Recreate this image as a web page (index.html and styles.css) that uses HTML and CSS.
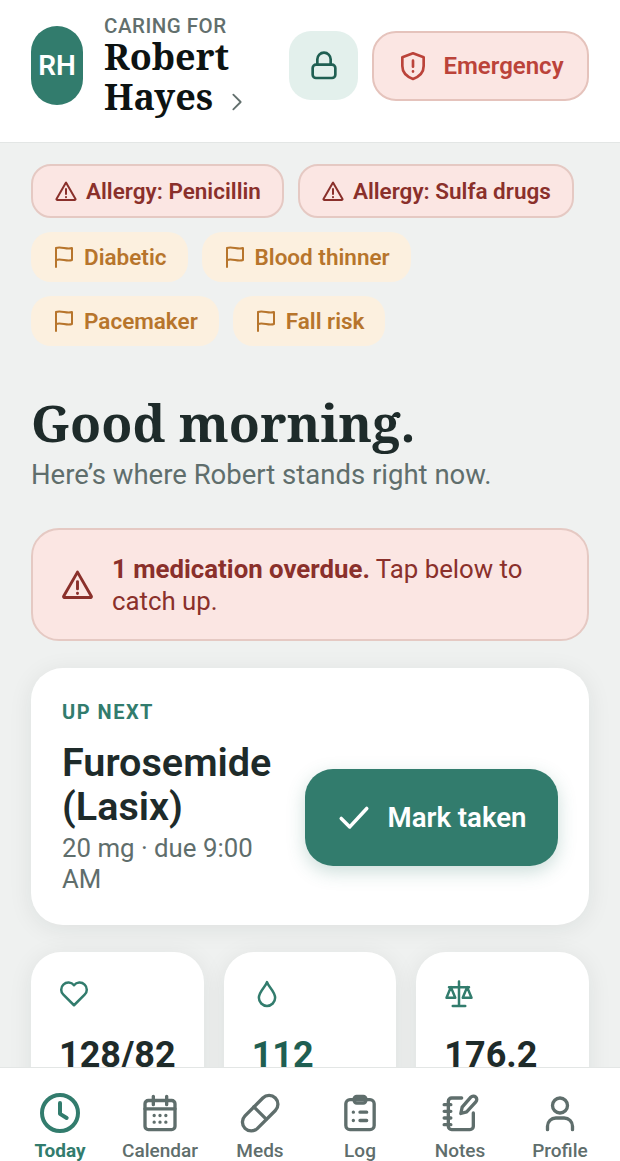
FILE: index.html
```html
<!DOCTYPE html>
<html lang="en">
<head>
<meta charset="utf-8">
<title>Today</title>
<link rel="stylesheet" href="styles.css">
</head>
<body>
<div class="app">
  <header class="topbar">
    <div class="avatar">RH</div>
    <div class="who">
      <div class="caring">CARING FOR</div>
      <div class="name">Robert<br>Hayes <svg class="chev" viewBox="0 0 24 24"><path d="M8 4l8 8-8 8"/></svg></div>
    </div>
    <button class="lock"><svg viewBox="0 0 24 24"><rect x="3.500" y="11" width="17" height="10" rx="2.500"/><path d="M7 11V7a5 5 0 0 1 10 0v4"/></svg></button>
    <button class="emergency"><svg viewBox="0 0 24 24"><path d="M12 2.500l8 3v6.500c0 5-3.400 8-8 9.700-4.600-1.700-8-4.700-8-9.700V5.500z"/><path d="M12 8v4.500M12 16v.2"/></svg>Emergency</button>
  </header>
  <main class="content">
    <div class="chips">
      <span class="chip allergy"><svg viewBox="0 0 24 24"><path d="M12 3.500L2.500 20a.6.6 0 0 0 .5.900h18a.6.6 0 0 0 .5-.900z"/><path d="M12 10v5M12 18v.2"/></svg>Allergy: Penicillin</span>
      <span class="chip allergy"><svg viewBox="0 0 24 24"><path d="M12 3.500L2.500 20a.6.6 0 0 0 .5.900h18a.6.6 0 0 0 .5-.900z"/><path d="M12 10v5M12 18v.2"/></svg>Allergy: Sulfa drugs</span>
      <span class="chip flag"><svg viewBox="0 0 24 24"><path d="M4 22V3c5-2 11 2 16 0v12c-5 2-11-2-16 0"/></svg>Diabetic</span>
      <span class="chip flag"><svg viewBox="0 0 24 24"><path d="M4 22V3c5-2 11 2 16 0v12c-5 2-11-2-16 0"/></svg>Blood thinner</span>
      <span class="chip flag"><svg viewBox="0 0 24 24"><path d="M4 22V3c5-2 11 2 16 0v12c-5 2-11-2-16 0"/></svg>Pacemaker</span>
      <span class="chip flag"><svg viewBox="0 0 24 24"><path d="M4 22V3c5-2 11 2 16 0v12c-5 2-11-2-16 0"/></svg>Fall risk</span>
    </div>
    <h1 class="greeting">Good morning.</h1>
    <p class="sub">Here’s where Robert stands right now.</p>
    <div class="alert">
      <svg viewBox="0 0 24 24"><path d="M12 3.500L2.500 20a.6.6 0 0 0 .5.900h18a.6.6 0 0 0 .5-.900z"/><path d="M12 10v5M12 18v.2"/></svg>
      <p><strong>1 medication overdue.</strong> Tap below to catch up.</p>
    </div>
    <section class="next">
      <div class="eyebrow">UP NEXT</div>
      <div class="next-row">
        <div class="next-info">
          <div class="med">Furosemide (Lasix)</div>
          <div class="dose">20 mg · due 9:00 AM</div>
        </div>
        <button class="taken"><svg viewBox="0 0 24 24"><path d="M3 13l6 6L21 6"/></svg>Mark taken</button>
      </div>
    </section>
    <div class="vitals">
      <div class="vital"><svg viewBox="0 0 24 24"><path d="M12 21L3.500 12.500a5.500 5.500 0 0 1 0-8 5.800 5.800 0 0 1 8.500 .5 5.800 5.800 0 0 1 8.500-.5 5.500 5.500 0 0 1 0 8z"/></svg><div class="val">128/82</div></div>
      <div class="vital"><svg viewBox="0 0 24 24"><path d="M12 2.500c1 3.500 6.500 7.500 6.500 12.500a6.500 6.500 0 0 1-13 0c0-5 5.500-9 6.500-12.500z"/></svg><div class="val good">112</div></div>
      <div class="vital"><svg viewBox="0 0 24 24"><path d="M12 2v19M7 21.500h10M4 6.500h16M5.500 6.500l-3.500 8.500h7zM18.500 6.500l-3.500 8.500h7z"/></svg><div class="val">176.2</div></div>
    </div>
  </main>
  <nav class="tabs">
    <a class="tab active"><svg viewBox="0 0 24 24"><circle cx="12" cy="12" r="10.800"/><path d="M12 6v6.500l4 2.500"/></svg>Today</a>
    <a class="tab"><svg viewBox="0 0 24 24"><rect x="3" y="4.500" width="18" height="17.500" rx="2"/><path d="M8 2v5M16 2v5M3 9.500h18"/><path class="dots" d="M8.500 13.500h.01M12 13.500h.01M15.500 13.500h.01M8.500 17.500h.01M12 17.500h.01M15.500 17.500h.01"/></svg>Calendar</a>
    <a class="tab"><svg viewBox="0 0 24 24"><path d="M10.500 21.200l10.700-10.700a5.300 5.300 0 0 0-7.500-7.500L3 13.700a5.300 5.300 0 0 0 7.500 7.500z"/><path d="M8.300 8.300l7.400 7.400"/></svg>Meds</a>
    <a class="tab"><svg viewBox="0 0 24 24"><rect x="3.500" y="4" width="17" height="18" rx="2.500"/><rect x="8.500" y="2" width="7" height="4" rx="1.500"/><path d="M8 11.500h.01M8 16.500h.01M12 11.500h4M12 16.500h4"/></svg>Log</a>
    <a class="tab"><svg viewBox="0 0 24 24"><path d="M13 3H7a2 2 0 0 0-2 2v15a2 2 0 0 0 2 2h11a2 2 0 0 0 2-2v-8"/><path d="M2.500 7h4M2.500 11h4M2.500 15h4M2.500 19h4"/><path d="M18.500 2.500a2 2 0 0 1 3 2.800l-5.500 6-3.500 1 .8-3.800z"/></svg>Notes</a>
    <a class="tab"><svg viewBox="0 0 24 24"><circle cx="12" cy="7.500" r="4.500"/><path d="M4.500 22v-2a5 5 0 0 1 5-5h5a5 5 0 0 1 5 5v2"/></svg>Profile</a>
  </nav>
</div>
</body>
</html>
```
FILE: styles.css
```css
* { box-sizing: border-box; }
html, body { margin: 0; height: 100%; overflow: hidden; }
body { font-family: Roboto, "Liberation Sans", sans-serif; background: #eff1f0; color: #1e2b2a; }
svg { fill: none; stroke: currentColor; stroke-linecap: round; stroke-linejoin: round; stroke-width: 2; display: block; flex: none; }
button { font: inherit; border: 0; }
.app { height: 1161px; display: flex; flex-direction: column; }
.topbar { height: 143px; flex: none; background: #fff; border-bottom: 1px solid #e3e6e5; display: flex; align-items: center; padding: 0 31px 11px; }
.avatar { width: 52px; height: 79px; border-radius: 26px; background: #327c6d; color: #fff; font-weight: 600; font-size: 28px; display: flex; align-items: center; justify-content: center; flex: none; }
.who { margin-left: 21px; flex: 1; min-width: 0; margin-top: 1px; }
.caring { font-size: 20.500px; font-weight: 500; color: #626f6d; line-height: 22px; letter-spacing: .5px; }
.name { font-family: "Noto Serif", "DejaVu Serif", serif; font-weight: 700; font-size: 36px; line-height: 39.600px; color: #0d1312; }
.chev { display: inline-block; width: 22px; height: 22px; color: #626f6d; vertical-align: -3px; margin-left: 4px; }
.lock { width: 69px; height: 69px; border-radius: 22px; background: #e3f0ec; color: #1f5f52; display: flex; align-items: center; justify-content: center; margin-right: 14px; flex: none; padding: 0; }
.lock svg { width: 32px; height: 32px; }
.emergency { width: 217px; height: 70px; border-radius: 24px; background: #fbe6e3; border: 2px solid #e5c3bc; color: #bb433a; font-weight: 600; font-size: 24px; display: flex; align-items: center; justify-content: center; gap: 14px; flex: none; padding: 0; }
.emergency svg { width: 32px; height: 32px; }
.content { flex: 1; min-height: 0; overflow: hidden; padding: 21px 31px 0; }
.chips { display: flex; flex-wrap: wrap; gap: 14px; }
.chip { display: inline-flex; align-items: center; font-weight: 600; font-size: 22.500px; border-radius: 20px; }
.chip svg { width: 24px; height: 24px; margin-right: 8px; }
.chip.allergy { height: 54px; padding: 0 21px; background: #fbe6e3; border: 2px solid #e5c9c3; color: #8a302b; }
.chip.flag { height: 50px; padding: 0 21px; background: #fcf0df; color: #b7752c; }
.greeting { font-family: "Noto Serif", "DejaVu Serif", serif; font-size: 50.800px; line-height: 62px; font-weight: 700; margin: 46px 0 0; color: #1e2b2a; }
.sub { margin: 3px 0 0; font-size: 27.500px; line-height: 36px; color: #5f6e6c; }
.alert { margin-top: 35px; height: 113px; border-radius: 28px; background: #fbe6e3; border: 2px solid #e5c9c3; color: #8a302b; display: flex; align-items: center; padding: 0 27px; gap: 17px; font-size: 25.800px; line-height: 32px; }
.alert svg { width: 35px; height: 35px; }
.alert p { margin: 0; }
.alert strong { font-weight: 700; }
.next { margin-top: 27px; height: 257px; background: #fff; border-radius: 32px; box-shadow: 0 4px 24px rgba(30,43,42,.08); padding: 32px 31px 0; }
.next-row { display: flex; align-items: center; gap: 20px; margin-top: 17px; }
.next-info { flex: 1; min-width: 0; }
.eyebrow { color: #327c6d; font-weight: 700; font-size: 20px; letter-spacing: 1.500px; line-height: 24px; }
.med { font-size: 39.600px; line-height: 44px; font-weight: 600; color: #1e2b2a; }
.dose { margin-top: 4px; font-size: 25.800px; line-height: 31px; color: #5f6e6c; }
.taken { width: 253px; height: 97px; flex: none; border-radius: 28px; background: #327c6d; color: #fff; font-weight: 600; font-size: 27.600px; display: flex; align-items: center; justify-content: center; gap: 17px; box-shadow: 0 6px 18px rgba(50,124,109,.25); padding: 0; margin-bottom: 2px; }
.taken svg { width: 34px; height: 34px; stroke-width: 2.500; }
.vitals { margin-top: 27px; display: grid; grid-template-columns: repeat(3, minmax(0, 1fr)); gap: 20px; }
.vital { height: 200px; background: #fff; border-radius: 30px; box-shadow: 0 4px 24px rgba(30,43,42,.08); padding: 27px 28px; color: #327c6d; }
.vital svg { width: 30px; height: 30px; }
.val { margin-top: 24px; font-size: 36px; line-height: 44px; font-weight: 700; color: #1e2b2a; }
.val.good { color: #1f5f52; }
.tabs { height: 94px; flex: none; background: #fff; border-top: 1px solid #e3e6e5; display: flex; padding: 0 10px; position: relative; z-index: 2; }
.tab { flex: 1 1 0; display: flex; flex-direction: column; align-items: center; padding-top: 25px; color: #5f6e6c; font-size: 19px; font-weight: 500; line-height: 24px; gap: 6px; }
.tab svg { width: 40px; height: 40px; }
.tab.active { color: #327c6d; font-weight: 700; }
.tab.active svg { stroke-width: 2.400; }
```
